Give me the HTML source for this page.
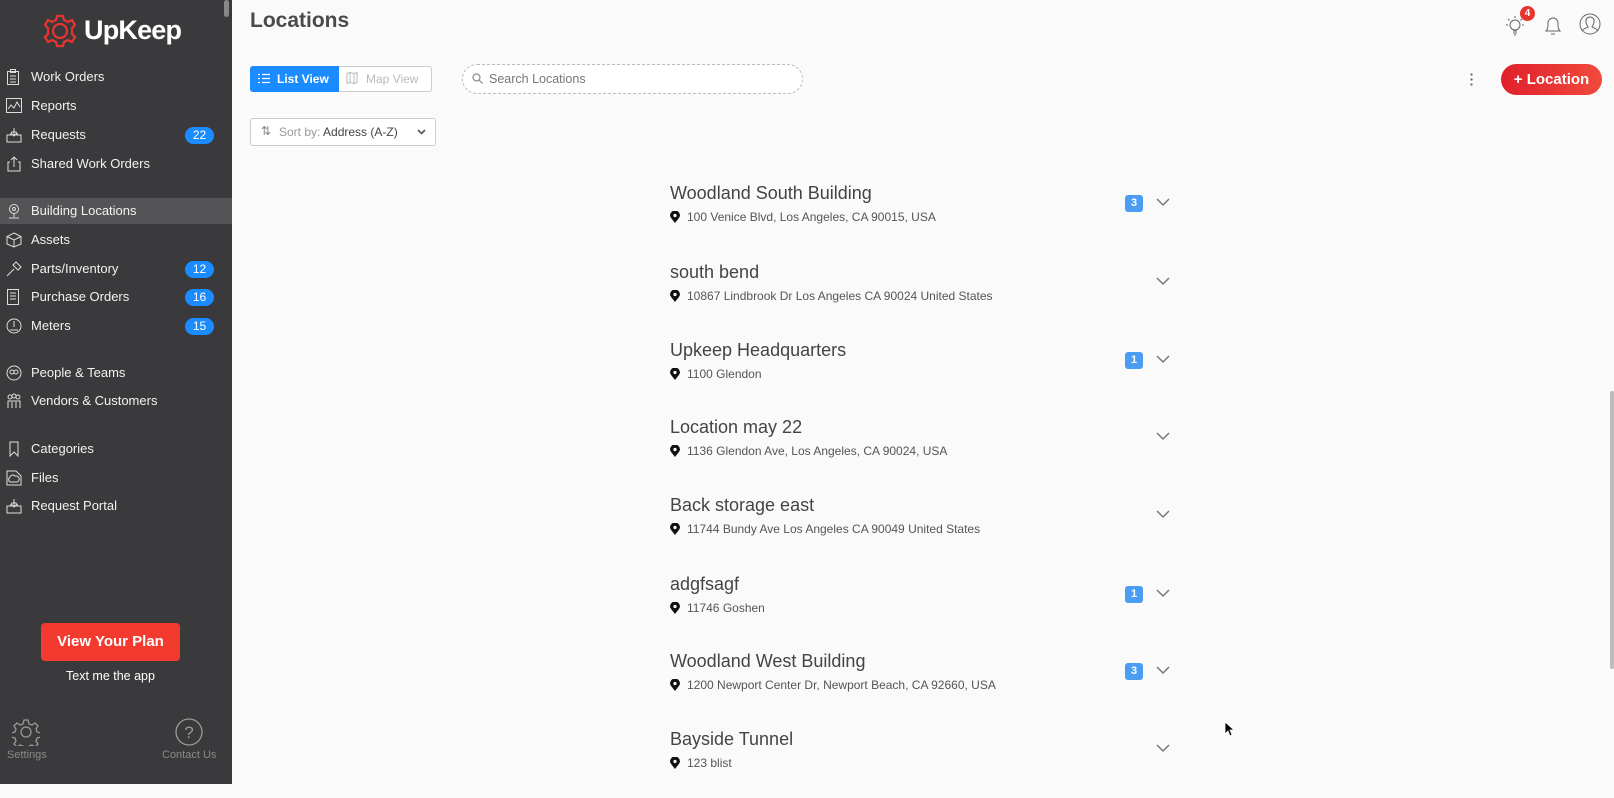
<!DOCTYPE html>
<html><head><meta charset="utf-8"><style>
*{margin:0;padding:0;box-sizing:border-box}
html,body{width:1614px;height:784px}
body{overflow:hidden;background:#fafafa;font-family:"Liberation Sans",sans-serif;position:relative}
.sb{position:absolute;left:0;top:0;width:232px;height:784px;background:#3a3a3c;color:#fff}
.abs{position:absolute}
.it{position:absolute;left:0;width:232px;height:26px;font-size:13px;line-height:26px;padding-left:31px;color:#f2f2f2}
.it svg{position:absolute;left:6px;top:5px}
.bd{position:absolute;left:185px;top:5px;width:29px;height:17px;border-radius:9px;background:#1a8cff;color:#fff;font-size:12px;line-height:17px;text-align:center}
.row{position:absolute;left:670px;width:510px;height:60px}
.row .n{font-size:18px;color:#444;position:absolute;left:0;top:-9px;white-space:nowrap}
.row .a{font-size:12px;color:#555;position:absolute;left:17px;top:18px;white-space:nowrap}
.row .pin{position:absolute;left:0;top:19px}
.row .b{position:absolute;left:455px;top:3px;width:18px;height:17px;border-radius:3px;background:#4a9df3;color:#fff;font-size:11px;font-weight:bold;text-align:center;line-height:17px}
.row .c{position:absolute;left:486px;top:6px}
</style></head><body>
<div class="sb">
 <div class="abs" style="left:224px;top:0;width:5px;height:17px;background:#888;border-radius:3px"></div>
 <svg class="abs" style="left:43px;top:13px" width="34" height="36" viewBox="0 0 34 36"><g fill="none" stroke="#e8342f" stroke-width="2.2"><circle cx="17" cy="18" r="7"/><path d="M14 3h6l1 4 4 2 4-2 3 5-3 3v6l3 3-3 5-4-2-4 2-1 4h-6l-1-4-4-2-4 2-3-5 3-3v-6l-3-3 3-5 4 2 4-2z"/></g></svg>
 <div class="abs" style="left:84px;top:15px;font-size:27px;font-weight:bold;color:#fff;letter-spacing:-0.8px">UpKeep</div>

 <div class="it" style="top:64px"><svg width="14" height="16" fill="none" stroke="#ddd"><rect x="1.5" y="2.5" width="11" height="13"/><rect x="4.5" y="0.5" width="5" height="3"/><path d="M4 7h6M4 10h6M4 13h6"/></svg>Work Orders</div>
 <div class="it" style="top:93px"><svg width="16" height="16" fill="none" stroke="#ddd"><rect x="0.5" y="0.5" width="15" height="14"/><path d="M2 11l3-4 3 3 3-6 3 5"/></svg>Reports</div>
 <div class="it" style="top:122px"><svg width="16" height="16" fill="none" stroke="#ddd"><path d="M1 8h14v7H1zM4 8l2-3h4l2 3M8 1v8M5 6l3 3 3-3"/></svg>Requests<span class="bd">22</span></div>
 <div class="it" style="top:151px"><svg width="16" height="16" fill="none" stroke="#ddd"><path d="M4 6H2v9h12V6h-2M8 11V1M5 4l3-3 3 3"/></svg>Shared Work Orders</div>
 <div class="it" style="top:198px;background:#545456"><svg width="16" height="16" fill="none" stroke="#ddd"><circle cx="8" cy="6" r="4.5"/><circle cx="8" cy="6" r="1.5"/><path d="M8 11v3M3 15h10"/></svg>Building Locations</div>
 <div class="it" style="top:227px"><svg width="16" height="16" fill="none" stroke="#ddd"><path d="M8 1l7 3.5v7.5L8 15l-7-3V4.5zM1 4.5L8 8l7-3.5M8 8v7"/></svg>Assets</div>
 <div class="it" style="top:256px"><svg width="16" height="16" fill="none" stroke="#ddd"><path d="M1 15l7-7M7 4l5 5 3-3-5-5z"/></svg>Parts/Inventory<span class="bd">12</span></div>
 <div class="it" style="top:284px"><svg width="14" height="16" fill="none" stroke="#ddd"><rect x="1.5" y="0.5" width="11" height="15"/><path d="M4 4h6M4 7h6M4 10h6"/></svg>Purchase Orders<span class="bd">16</span></div>
 <div class="it" style="top:313px"><svg width="16" height="16" fill="none" stroke="#ddd"><circle cx="8" cy="8" r="7"/><path d="M8 3v6M4 12h8"/></svg>Meters<span class="bd">15</span></div>
 <div class="it" style="top:360px"><svg width="16" height="16" fill="none" stroke="#ddd"><circle cx="8" cy="8" r="7"/><circle cx="6" cy="7" r="2"/><circle cx="10" cy="7" r="2"/></svg>People &amp; Teams</div>
 <div class="it" style="top:388px"><svg width="16" height="16" fill="none" stroke="#ddd"><circle cx="4" cy="4" r="2"/><circle cx="8" cy="3" r="2"/><circle cx="12" cy="4" r="2"/><path d="M2 15V8h12v7M6 15V9M10 15V9"/></svg>Vendors &amp; Customers</div>
 <div class="it" style="top:436px"><svg width="16" height="16" fill="none" stroke="#ddd"><path d="M4 1h8v14l-4-4-4 4z"/></svg>Categories</div>
 <div class="it" style="top:465px"><svg width="16" height="16" fill="none" stroke="#ddd"><path d="M1 1h9l5 5v9H1zM4 12a3 3 0 010-5 3 3 0 015-1 3 3 0 012 6z"/></svg>Files</div>
 <div class="it" style="top:493px"><svg width="16" height="16" fill="none" stroke="#ddd"><path d="M1 8h14v7H1zM4 8l2-3h4l2 3M8 1v8M5 6l3 3 3-3"/></svg>Request Portal</div>

 <div class="abs" style="left:41px;top:623px;width:139px;height:38px;background:#f23a2f;border-radius:4px;color:#fff;font-weight:bold;font-size:15px;text-align:center;line-height:38px">View Your Plan</div>
 <div class="abs" style="left:0;width:221px;top:669px;text-align:center;font-size:12.5px;color:#fff">Text me the app</div>
 <svg class="abs" style="left:12px;top:718px" width="28" height="28" viewBox="0 0 28 28" fill="none" stroke="#999" stroke-width="1.3"><circle cx="14" cy="14" r="5"/><path d="M12 2h4l1 4 3 1 3-2 3 3-2 3 1 3 4 1v4l-4 1-1 3 2 3-3 3-3-2-3 1-1 4h-4l-1-4-3-1-3 2-3-3 2-3-1-3-4-1v-4l4-1 1-3-2-3 3-3 3 2 3-1z"/></svg>
 <div class="abs" style="left:7px;top:749px;font-size:11px;color:#8a8a8a">Settings</div>
 <svg class="abs" style="left:175px;top:718px" width="28" height="28" fill="none" stroke="#999" stroke-width="1.3"><circle cx="14" cy="14" r="13"/><text x="14" y="20" font-size="17" fill="#999" stroke="none" text-anchor="middle" font-family="Liberation Sans">?</text></svg>
 <div class="abs" style="left:162px;top:749px;font-size:11px;color:#8a8a8a">Contact Us</div>
</div>

<div class="abs" style="left:250px;top:9px;font-size:21px;font-weight:bold;color:#4a4a4a">Locations</div>

<div class="abs" style="left:250px;top:66px;width:182px;height:26px;border:1px solid #ccc;border-radius:3px;background:#fff"></div>
<div class="abs" style="left:250px;top:66px;width:89px;height:26px;background:#1a8cff;border-radius:3px 0 0 3px;color:#fff;font-size:12px;line-height:26px;padding-left:27px;font-weight:bold">List View</div>
<svg class="abs" style="left:258px;top:73px" width="12" height="11" stroke="#fff" stroke-width="1.3"><path d="M0 1.5h2M4 1.5h8M0 5.5h2M4 5.5h8M0 9.5h2M4 9.5h8"/></svg>
<svg class="abs" style="left:346px;top:72px" width="12" height="12" fill="none" stroke="#bbb"><path d="M1 1.5l3-1 4 1 3-1v10l-3 1-4-1-3 1zM4 1v10M8 1.5v10"/></svg>
<div class="abs" style="left:366px;top:66px;font-size:12px;line-height:26px;color:#bbb">Map View</div>

<div class="abs" style="left:462px;top:64px;width:341px;height:30px;border:1px dashed #bbb;border-radius:15px;background:#fff"></div>
<svg class="abs" style="left:472px;top:73px" width="11" height="11" fill="none" stroke="#888" stroke-width="1.2"><circle cx="4.5" cy="4.5" r="3.5"/><path d="M7 7l3.5 3.5"/></svg>
<div class="abs" style="left:489px;top:64px;font-size:12.5px;line-height:30px;color:#777">Search Locations</div>

<div class="abs" style="left:250px;top:118px;width:186px;height:28px;border:1px solid #ccc;border-radius:3px;background:#fff;font-size:12px;line-height:26px;padding-left:28px;color:#999">Sort by: <span style="color:#444">Address (A-Z)</span></div>
<div class="abs" style="left:261px;top:124px;font-size:12px;color:#888">⇅</div>
<svg class="abs" style="left:417px;top:129px" width="9" height="6" fill="none" stroke="#555" stroke-width="1.6"><path d="M1 1l3.5 3.5L8 1"/></svg>

<svg class="abs" style="left:1504px;top:14px" width="22" height="24" fill="none" stroke="#666"><circle cx="11" cy="11" r="5"/><path d="M9 17h4M9 19h4M10 21h2M11 2v2M4 5l1.5 1.5M18 5l-1.5 1.5M2 11h2M18 11h2"/></svg>
<div class="abs" style="left:1520px;top:6px;width:15px;height:15px;border-radius:8px;background:#e8342f;color:#fff;font-size:10px;font-weight:bold;text-align:center;line-height:15px">4</div>
<svg class="abs" style="left:1543px;top:13px" width="20" height="24" fill="none" stroke="#666"><path d="M3 18c2-2 2-4 2-8a5 5 0 0110 0c0 4 0 6 2 8zM8 21h4"/></svg>
<svg class="abs" style="left:1579px;top:13px" width="22" height="22" fill="none" stroke="#666"><circle cx="11" cy="11" r="10"/><path d="M11 4a4 4 0 00-4 5c0 3 2 4 2 5-2 1-5 2-6 4M11 4a4 4 0 014 5c0 3-2 4-2 5 2 1 5 2 6 4"/></svg>

<div class="abs" style="left:1470px;top:72px;width:3px;height:14px;background:radial-gradient(circle,#666 1px,transparent 1.3px) 0 0/3px 5px"></div>
<div class="abs" style="left:1501px;top:64px;width:101px;height:31px;border-radius:16px;background:linear-gradient(90deg,#e0202c,#f14a3c);color:#fff;font-size:15px;font-weight:bold;line-height:31px;text-align:center">+ Location</div>

<div class="row" style="top:192px"><div class="n">Woodland South Building</div><svg class="pin" width="10" height="12"><path d="M5 12C1 7 0 5.5 0 4.5a5 5 0 0110 0C10 5.5 9 7 5 12z" fill="#111"/><circle cx="5" cy="4.5" r="1.6" fill="#fff"/></svg><div class="a">100 Venice Blvd, Los Angeles, CA 90015, USA</div><div class="b">3</div><svg class="c" width="14" height="9" fill="none" stroke="#777" stroke-width="1.5"><path d="M1 1l6 6 6-6"/></svg></div>
<div class="row" style="top:271px"><div class="n">south bend</div><svg class="pin" width="10" height="12"><path d="M5 12C1 7 0 5.5 0 4.5a5 5 0 0110 0C10 5.5 9 7 5 12z" fill="#111"/><circle cx="5" cy="4.5" r="1.6" fill="#fff"/></svg><div class="a">10867 Lindbrook Dr Los Angeles CA 90024 United States</div><svg class="c" width="14" height="9" fill="none" stroke="#777" stroke-width="1.5"><path d="M1 1l6 6 6-6"/></svg></div>
<div class="row" style="top:349px"><div class="n">Upkeep Headquarters</div><svg class="pin" width="10" height="12"><path d="M5 12C1 7 0 5.5 0 4.5a5 5 0 0110 0C10 5.5 9 7 5 12z" fill="#111"/><circle cx="5" cy="4.5" r="1.6" fill="#fff"/></svg><div class="a">1100 Glendon</div><div class="b">1</div><svg class="c" width="14" height="9" fill="none" stroke="#777" stroke-width="1.5"><path d="M1 1l6 6 6-6"/></svg></div>
<div class="row" style="top:426px"><div class="n">Location may 22</div><svg class="pin" width="10" height="12"><path d="M5 12C1 7 0 5.5 0 4.5a5 5 0 0110 0C10 5.5 9 7 5 12z" fill="#111"/><circle cx="5" cy="4.5" r="1.6" fill="#fff"/></svg><div class="a">1136 Glendon Ave, Los Angeles, CA 90024, USA</div><svg class="c" width="14" height="9" fill="none" stroke="#777" stroke-width="1.5"><path d="M1 1l6 6 6-6"/></svg></div>
<div class="row" style="top:504px"><div class="n">Back storage east</div><svg class="pin" width="10" height="12"><path d="M5 12C1 7 0 5.5 0 4.5a5 5 0 0110 0C10 5.5 9 7 5 12z" fill="#111"/><circle cx="5" cy="4.5" r="1.6" fill="#fff"/></svg><div class="a">11744 Bundy Ave Los Angeles CA 90049 United States</div><svg class="c" width="14" height="9" fill="none" stroke="#777" stroke-width="1.5"><path d="M1 1l6 6 6-6"/></svg></div>
<div class="row" style="top:583px"><div class="n">adgfsagf</div><svg class="pin" width="10" height="12"><path d="M5 12C1 7 0 5.5 0 4.5a5 5 0 0110 0C10 5.5 9 7 5 12z" fill="#111"/><circle cx="5" cy="4.5" r="1.6" fill="#fff"/></svg><div class="a">11746 Goshen</div><div class="b">1</div><svg class="c" width="14" height="9" fill="none" stroke="#777" stroke-width="1.5"><path d="M1 1l6 6 6-6"/></svg></div>
<div class="row" style="top:660px"><div class="n">Woodland West Building</div><svg class="pin" width="10" height="12"><path d="M5 12C1 7 0 5.5 0 4.5a5 5 0 0110 0C10 5.5 9 7 5 12z" fill="#111"/><circle cx="5" cy="4.5" r="1.6" fill="#fff"/></svg><div class="a">1200 Newport Center Dr, Newport Beach, CA 92660, USA</div><div class="b">3</div><svg class="c" width="14" height="9" fill="none" stroke="#777" stroke-width="1.5"><path d="M1 1l6 6 6-6"/></svg></div>
<div class="row" style="top:738px"><div class="n">Bayside Tunnel</div><svg class="pin" width="10" height="12"><path d="M5 12C1 7 0 5.5 0 4.5a5 5 0 0110 0C10 5.5 9 7 5 12z" fill="#111"/><circle cx="5" cy="4.5" r="1.6" fill="#fff"/></svg><div class="a">123 blist</div><svg class="c" width="14" height="9" fill="none" stroke="#777" stroke-width="1.5"><path d="M1 1l6 6 6-6"/></svg></div>

<svg class="abs" style="left:1224px;top:721px" width="10" height="16"><path d="M1 1v12l3-3 2 5 2-1-2-5h4z" fill="#000" stroke="#fff" stroke-width="0.8"/></svg>
<div class="abs" style="left:1610px;top:391px;width:4px;height:278px;background:#bbb;border-radius:2px"></div>
</body></html>
